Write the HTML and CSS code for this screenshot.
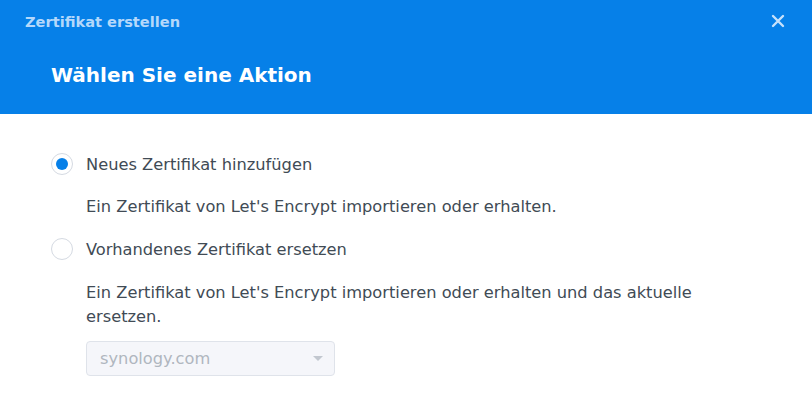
FILE: index.html
```html
<!DOCTYPE html>
<html lang="de">
<head>
<meta charset="utf-8">
<link rel="stylesheet" href="styles.css">
</head>
<body>
<div class="dialog">
  <header class="head">
    <div class="topbar">
      <span class="wintitle">Zertifikat erstellen</span>
      <span class="close">
        <svg width="14" height="14" viewBox="0 0 14 14"><path d="M2 2L12 12M12 2L2 12" stroke="#c6e1fb" stroke-width="2.4" stroke-linecap="round"/></svg>
      </span>
    </div>
    <h1 class="title">Wählen Sie eine Aktion</h1>
  </header>
  <main class="body">
    <div class="option">
      <span class="radio checked"></span>
      <span class="label">Neues Zertifikat hinzufügen</span>
    </div>
    <p class="desc">Ein Zertifikat von Let's Encrypt importieren oder erhalten.</p>
    <div class="option">
      <span class="radio"></span>
      <span class="label">Vorhandenes Zertifikat ersetzen</span>
    </div>
    <p class="desc last">Ein Zertifikat von Let's Encrypt importieren oder erhalten und das aktuelle ersetzen.</p>
    <div class="select">
      <span class="value">synology.com</span>
      <span class="arrow"></span>
    </div>
  </main>
</div>
</body>
</html>
```
FILE: styles.css
```css
* { box-sizing: border-box; }
html, body { margin: 0; padding: 0; background: #fff; }
body { font-family: "DejaVu Sans", Verdana, sans-serif; width: 812px; height: 412px; overflow: hidden; }
.head { background: #0680e8; height: 114px; padding: 0 24px 0 25px; }
.topbar { height: 42px; display: flex; align-items: center; justify-content: space-between; }
.wintitle { color: #b4d8fb; font-size: 14.6px; font-weight: bold; padding-top: 1px; }
.close { display: flex; width: 16px; height: 16px; align-items: center; justify-content: center; margin-right: 2px; }
.title { margin: 0; padding: 21px 0 0 26px; color: #fff; font-size: 20px; font-weight: bold; line-height: 24px; }
.body { padding: 38px 0 0 51px; color: #414b55; font-size: 16.25px; }
.option { display: flex; align-items: center; height: 24px; }
.radio { width: 22px; height: 22px; border-radius: 50%; border: 1px solid #d5dae2; background: #fff; margin-right: 13px; display: flex; align-items: center; justify-content: center; }
.radio.checked::after { content: ""; width: 12px; height: 12px; border-radius: 50%; background: #0680e8; }
.desc { margin: 19px 0 18px 35px; line-height: 24px; max-width: 640px; }
.desc.last { margin: 20px 0 12px 35px; }
.select { margin-left: 35px; width: 249px; height: 35px; border: 1px solid #dfe3ea; border-radius: 4px; background: #f5f6fa; display: flex; align-items: center; justify-content: space-between; padding: 0 11px 0 13px; }
.value { color: #b0b6bf; font-size: 16.25px; }
.arrow { width: 0; height: 0; border-left: 5px solid transparent; border-right: 5px solid transparent; border-top: 5px solid #c2c7cf; }
```
